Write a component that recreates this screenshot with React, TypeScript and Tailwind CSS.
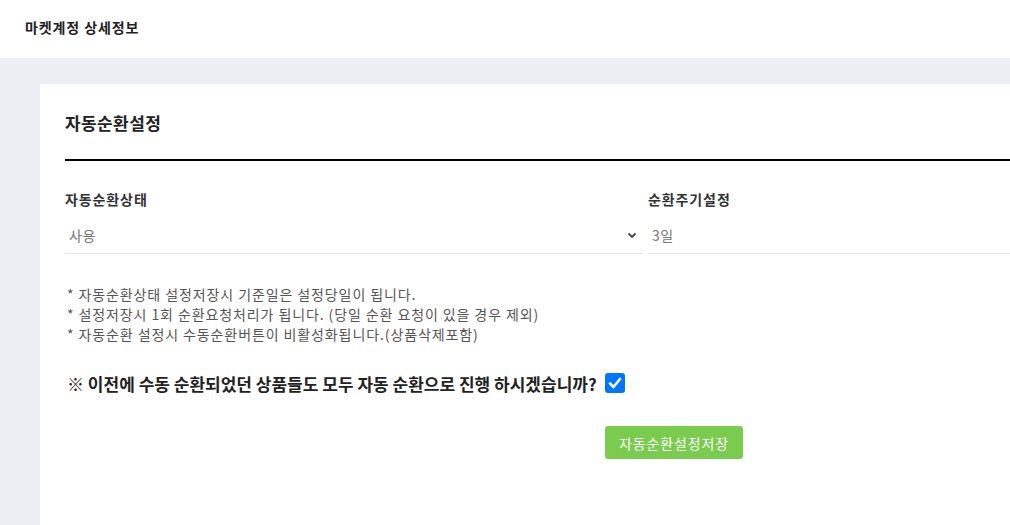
import React from "react";

export default function App() {
  return (
    <div
      className="h-screen w-[1010px] overflow-hidden bg-[#ebeef3] text-[#222]"
      style={{ fontFamily: '"Noto Sans CJK KR", "Noto Sans", sans-serif' }}
    >
      <div className="h-[58px] bg-white flex items-center pl-[25px] pb-[4px]">
        <h1 className="text-[14px] font-bold text-[#222] leading-none tracking-[0.9px]">마켓계정 상세정보</h1>
      </div>
      <div className="pt-[26px] pl-[40px]">
        <div className="bg-white w-[1268px] h-[460px] px-[25px]">
          <div className="h-[77px] flex items-end border-b-2 border-black pb-[28px]">
            <h2 className="text-[17px] font-semibold leading-none text-[#222] tracking-[0.4px]">자동순환설정</h2>
          </div>
          <div className="grid grid-cols-[578px_1fr] gap-x-[5px] mt-[28px]">
            <div>
              <div className="text-[14px] font-semibold text-[#333] leading-[20px] h-[20px] tracking-[0.9px]">자동순환상태</div>
              <div className="mt-[14px] h-[31px] border-b border-[#e5e5e5] flex items-center justify-between pl-[4px] pr-[5px] pb-[6px]">
                <span className="text-[14px] text-[#777] leading-none tracking-[0.5px]">사용</span>
                <svg width="10" height="7" viewBox="0 0 10 7" className="mr-[1px]">
                  <path d="M1.5 1.5 L5 5 L8.5 1.5" fill="none" stroke="#444" strokeWidth="1.8" />
                </svg>
              </div>
            </div>
            <div>
              <div className="text-[14px] font-semibold text-[#333] leading-[20px] h-[20px] tracking-[0.9px]">순환주기설정</div>
              <div className="mt-[14px] h-[31px] border-b border-[#e5e5e5] flex items-center pl-[4px] pb-[6px]">
                <span className="text-[14px] text-[#777] leading-none tracking-[0.5px]">3일</span>
              </div>
            </div>
          </div>
          <div className="mt-[30px] pl-[2px] text-[14px] text-[#555] leading-[20px] tracking-[0.9px]">
            <p>* 자동순환상태 설정저장시 기준일은 설정당일이 됩니다.</p>
            <p>* 설정저장시 1회 순환요청처리가 됩니다. (당일 순환 요청이 있을 경우 제외)</p>
            <p>* 자동순환 설정시 수동순환버튼이 비활성화됩니다.(상품삭제포함)</p>
          </div>
          <div className="mt-[29px] pl-[2px] flex items-center gap-[8px]">
            <span className="text-[17px] font-bold text-[#222] leading-none">
              ※ 이전에 수동 순환되었던 상품들도 모두 자동 순환으로 진행 하시겠습니까?
            </span>
            <span className="w-[20px] h-[20px] rounded-[3px] bg-[#0075ff] flex items-center justify-center">
              <svg width="14" height="12" viewBox="0 0 14 12">
                <path d="M2 6.5 L5.5 10 L12 2" fill="none" stroke="white" strokeWidth="2.6" strokeLinecap="round" strokeLinejoin="round" />
              </svg>
            </span>
          </div>
          <div className="mt-[33px] w-[678px] flex justify-end">
            <button className="w-[138px] h-[33px] rounded-[3px] bg-[#7acc4e] text-white text-[14px] leading-none tracking-[0.9px]">
              자동순환설정저장
            </button>
          </div>
        </div>
      </div>
    </div>
  );
}
